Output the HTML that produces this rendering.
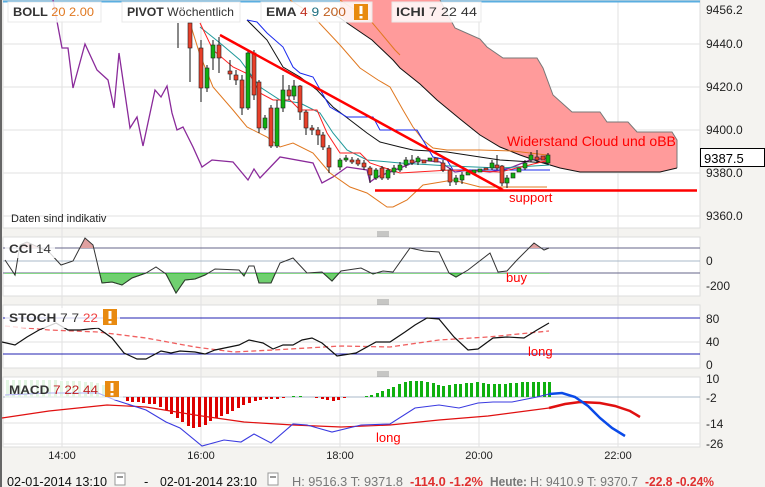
<!DOCTYPE html>
<html><head><meta charset="utf-8"><style>
html,body{margin:0;padding:0;background:#f4f3f0;}
svg{display:block;font-family:"Liberation Sans",sans-serif;}
</style></head><body>
<svg width="765" height="487" viewBox="0 0 765 487" xmlns="http://www.w3.org/2000/svg">
<rect width="765" height="487" fill="#f4f3f0"/>
<rect x="0" y="0" width="2" height="487" fill="#666"/>
<rect x="3" y="0" width="697" height="228" fill="#fff" stroke="#ddd"/>
<rect x="3" y="237" width="697" height="59" fill="#fff" stroke="#ddd"/>
<rect x="3" y="305" width="697" height="63" fill="#fff" stroke="#ddd"/>
<rect x="3" y="377" width="697" height="70" fill="#fff" stroke="#ddd"/>
<g stroke="#e2e2e2" stroke-width="1">
<line x1="62" y1="0" x2="62" y2="447"/><line x1="201" y1="0" x2="201" y2="447"/><line x1="340" y1="0" x2="340" y2="447"/><line x1="479" y1="0" x2="479" y2="447"/><line x1="618" y1="0" x2="618" y2="447"/>
<line x1="3" y1="44" x2="700" y2="44"/><line x1="3" y1="87" x2="700" y2="87"/><line x1="3" y1="130" x2="700" y2="130"/><line x1="3" y1="173" x2="700" y2="173"/><line x1="3" y1="216" x2="700" y2="216"/>
<line x1="3" y1="286" x2="700" y2="286"/><line x1="3" y1="342" x2="700" y2="342"/><line x1="3" y1="423" x2="700" y2="423"/><line x1="3" y1="444" x2="700" y2="444"/>
</g>
<line x1="3" y1="1.5" x2="700" y2="1.5" stroke="#5aaee0" stroke-width="2"/>
<polygon points="340,0 440,0 455,28 480,39 487,47 503,58 537,58 543,68 553,95 572,112 600,112 607,122 628,122 637,132 672,132 677,140 677,168 660,172 640,172 580,172 560,168 540,162 520,155 500,147 480,135 460,119 437,100 420,84 400,68 393,60 372,40 350,25 340,15" fill="#ff9b9b"/>
<polyline points="440,0 455,28 480,39 487,47 503,58 537,58 543,68 553,95 572,112 600,112 607,122 628,122 637,132 672,132 677,140 677,168" fill="none" stroke="#777"/>
<polyline points="677,168 660,172 640,172 580,172 560,168 540,162 520,155 500,147 480,135 460,119 437,100 420,84 400,68 393,60 372,40 350,25 340,18 330,12" fill="none" stroke="#111"/>
<polyline fill="none" stroke="#8a2a9a" stroke-width="1.3" points="53,0 62,48 68,48 73,88 85,44 97,70 108,80 114,108 119,53 130,128 137,117 143,146 155,90 161,97 167,86 172,113 177,130 183,127 193,147 202,167 212,160 233,162 248,180 254,169 260,178 280,157 313,163 322,183 333,177 347,167 367,170 370,182 377,177 390,172 400,168 420,160 440,162 455,172 470,170 490,172 510,168 530,160 548,158"/>
<polyline fill="none" stroke="#e07820" points="290,0 310,13 340,45 360,68 378,80 390,87 403,110 413,127 423,140 433,148 447,150 480,150 513,151 547,155"/>
<polyline fill="none" stroke="#e07820" points="190,23 200,55 213,87 233,110 247,127 267,137 280,147 293,143 313,153 330,173 350,187 367,193 387,207 393,207 407,200 423,185 453,180 480,187 547,187"/>
<polyline fill="none" stroke="#e07820" points="340,0 370,20 395,50 400,55"/>
<polyline fill="none" stroke="#111" points="247,20 267,40 283,67 300,77 317,90 333,107 350,120 367,133 380,142 400,147 413,150 447,152 480,157 500,160 548,163"/>
<polyline fill="none" stroke="#1a2aee" points="247,20 257,22 267,33 283,47 293,67 300,73 313,77 330,107 347,117 373,117 380,130 417,130 433,157 447,160 453,170 550,170"/>
<polyline fill="none" stroke="#20999a" points="200,27 220,43 240,60 260,87 280,100 300,103 320,113 333,133 347,150 367,160 400,163 450,166 500,168 550,165"/>
<polyline fill="none" stroke="#ff2020" points="200,23 213,50 233,67 250,75 260,93 273,100 290,100 300,110 317,110 327,133 340,153 360,153 370,163 400,173 450,170 500,172 550,160"/>
<g stroke="#111" stroke-width="1">
<line x1="178" y1="23" x2="178" y2="48"/>
<line x1="190" y1="23" x2="190" y2="82"/><line x1="201" y1="40" x2="201" y2="102"/><line x1="207" y1="65" x2="207" y2="92"/><line x1="213" y1="40" x2="213" y2="70"/><line x1="219" y1="37" x2="219" y2="73"/><line x1="230" y1="60" x2="230" y2="80"/><line x1="236" y1="70" x2="236" y2="85"/><line x1="242" y1="75" x2="242" y2="115"/><line x1="248" y1="50" x2="248" y2="110"/><line x1="254" y1="50" x2="254" y2="100"/><line x1="259" y1="80" x2="259" y2="133"/><line x1="265" y1="115" x2="265" y2="130"/><line x1="271" y1="105" x2="271" y2="148"/><line x1="277" y1="100" x2="277" y2="148"/><line x1="283" y1="75" x2="283" y2="112"/><line x1="289" y1="85" x2="289" y2="100"/><line x1="294" y1="80" x2="294" y2="100"/><line x1="300" y1="85" x2="300" y2="120"/><line x1="306" y1="110" x2="306" y2="135"/><line x1="312" y1="125" x2="312" y2="135"/><line x1="318" y1="127" x2="318" y2="145"/><line x1="323" y1="132" x2="323" y2="150"/><line x1="329" y1="145" x2="329" y2="173"/><line x1="340" y1="158" x2="340" y2="170"/><line x1="346" y1="155" x2="346" y2="162"/><line x1="352" y1="157" x2="352" y2="164"/><line x1="358" y1="158" x2="358" y2="166"/><line x1="364" y1="160" x2="364" y2="170"/><line x1="370" y1="166" x2="370" y2="183"/><line x1="376" y1="168" x2="376" y2="180"/><line x1="382" y1="166" x2="382" y2="180"/><line x1="388" y1="168" x2="388" y2="180"/><line x1="394" y1="165" x2="394" y2="175"/><line x1="400" y1="162" x2="400" y2="172"/><line x1="406" y1="157" x2="406" y2="168"/><line x1="412" y1="155" x2="412" y2="165"/><line x1="418" y1="156" x2="418" y2="165"/><line x1="443" y1="160" x2="443" y2="172"/><line x1="450" y1="168" x2="450" y2="186"/><line x1="456" y1="175" x2="456" y2="185"/><line x1="462" y1="172" x2="462" y2="184"/><line x1="492" y1="160" x2="492" y2="170"/><line x1="497" y1="155" x2="497" y2="170"/><line x1="502" y1="165" x2="502" y2="186"/><line x1="507" y1="175" x2="507" y2="188"/><line x1="525" y1="160" x2="525" y2="170"/><line x1="531" y1="152" x2="531" y2="162"/><line x1="537" y1="150" x2="537" y2="163"/><line x1="548" y1="153" x2="548" y2="165"/>
</g>
<g stroke="#222" stroke-width="0.6">
<g fill="#e8402a">
<rect x="188" y="23" width="4" height="25"/><rect x="199" y="48" width="4" height="40"/><rect x="217" y="45" width="4" height="13"/><rect x="228" y="71" width="4" height="3"/><rect x="234" y="75" width="4" height="5"/><rect x="240" y="80" width="4" height="28"/><rect x="252" y="53" width="4" height="42"/><rect x="257" y="82" width="4" height="46"/><rect x="269" y="108" width="4" height="38"/><rect x="287" y="90" width="4" height="6"/><rect x="298" y="86" width="4" height="26"/><rect x="304" y="112" width="4" height="16"/><rect x="310" y="128" width="4" height="2"/><rect x="316" y="130" width="4" height="5"/><rect x="321" y="135" width="4" height="12"/><rect x="327" y="148" width="4" height="19"/><rect x="350" y="160" width="4" height="2"/><rect x="356" y="160" width="4" height="4"/><rect x="362" y="163" width="4" height="4"/><rect x="368" y="168" width="4" height="7"/><rect x="380" y="168" width="4" height="10"/><rect x="410" y="160" width="4" height="3"/><rect x="422" y="160" width="4" height="3"/><rect x="434" y="158" width="4" height="4"/><rect x="441" y="163" width="4" height="7"/><rect x="448" y="170" width="4" height="12"/><rect x="484" y="168" width="4" height="2"/><rect x="495" y="165" width="4" height="3"/><rect x="500" y="166" width="4" height="17"/><rect x="535" y="157" width="4" height="3"/><rect x="541" y="156" width="4" height="4"/>
</g>
<g fill="#10b010">
<rect x="205" y="68" width="4" height="20"/><rect x="211" y="45" width="4" height="13"/><rect x="246" y="53" width="4" height="55"/><rect x="263" y="118" width="4" height="10"/><rect x="275" y="108" width="4" height="38"/><rect x="281" y="90" width="4" height="18"/><rect x="292" y="86" width="4" height="10"/><rect x="338" y="160" width="4" height="7"/><rect x="344" y="158" width="4" height="2"/><rect x="374" y="170" width="4" height="8"/><rect x="386" y="170" width="4" height="8"/><rect x="392" y="168" width="4" height="4"/><rect x="398" y="165" width="4" height="5"/><rect x="404" y="160" width="4" height="5"/><rect x="416" y="158" width="4" height="4"/><rect x="428" y="158" width="4" height="3"/><rect x="454" y="178" width="4" height="4"/><rect x="460" y="175" width="4" height="5"/><rect x="466" y="172" width="4" height="3"/><rect x="472" y="170" width="4" height="3"/><rect x="478" y="169" width="4" height="3"/><rect x="490" y="163" width="4" height="5"/><rect x="505" y="178" width="4" height="5"/><rect x="511" y="173" width="4" height="5"/><rect x="517" y="168" width="4" height="4"/><rect x="523" y="163" width="4" height="5"/><rect x="529" y="155" width="4" height="5"/><rect x="546" y="155" width="4" height="8"/>
</g></g>
<line x1="220" y1="35" x2="503" y2="190" stroke="#f00" stroke-width="2.5"/>
<line x1="375" y1="190.5" x2="697" y2="190.5" stroke="#f00" stroke-width="2.5"/>
<text x="507" y="146" font-size="14" fill="#f00">Widerstand Cloud und oBB</text>
<text x="509" y="202" font-size="13" fill="#f00">support</text>
<g fill="#fff" fill-opacity="0.85" stroke="#e8e8e8">
<rect x="8" y="2" width="93" height="20"/><rect x="122" y="2" width="118" height="20"/><rect x="261" y="2" width="111" height="20"/><rect x="392" y="2" width="89" height="20"/>
</g>
<g font-size="12">
<text x="13" y="16" fill="#333" font-weight="bold" textLength="81" lengthAdjust="spacingAndGlyphs">BOLL <tspan fill="#e07820" font-weight="normal">20 2.00</tspan></text>
<text x="127" y="16" fill="#333" font-weight="bold" textLength="107" lengthAdjust="spacingAndGlyphs">PIVOT <tspan font-weight="normal">Wöchentlich</tspan></text>
<text x="266" y="16" fill="#333" font-weight="bold" textLength="80" lengthAdjust="spacingAndGlyphs">EMA <tspan fill="#c03020" font-weight="normal">4 </tspan><tspan fill="#207080" font-weight="normal">9 </tspan><tspan fill="#c06020" font-weight="normal">200</tspan></text>
<text x="396" y="16" fill="#333" font-weight="bold" textLength="81" lengthAdjust="spacingAndGlyphs">ICHI <tspan font-weight="normal">7 22 44</tspan></text>
<text x="11" y="222" font-size="11" fill="#222">Daten sind indikativ</text>
</g>
<rect x="354" y="4" width="14" height="16" fill="#e88a10"/><rect x="359.5" y="6" width="3" height="8" fill="#fff"/><rect x="359.5" y="16" width="3" height="2.5" fill="#fff"/>
<g font-size="12" fill="#222">
<text x="706" y="14">9456.2</text><text x="706" y="48">9440.0</text><text x="706" y="91">9420.0</text><text x="706" y="134">9400.0</text><text x="706" y="177">9380.0</text><text x="706" y="220">9360.0</text>
<text x="706" y="265">0</text><text x="706" y="290">-200</text>
<text x="706" y="323">80</text><text x="706" y="346">40</text><text x="706" y="369">0</text>
<text x="706" y="383">10</text><text x="706" y="402">-2</text><text x="706" y="428">-14</text><text x="706" y="448">-26</text>
</g>
<rect x="700.5" y="148.5" width="64" height="18" fill="#fff" stroke="#000"/>
<text x="704" y="163" font-size="13" fill="#000">9387.5</text>
<g stroke="#999"><line x1="377" y1="232" x2="389" y2="232"/><line x1="377" y1="234" x2="389" y2="234"/><line x1="377" y1="236" x2="389" y2="236"/>
<line x1="377" y1="300" x2="389" y2="300"/><line x1="377" y1="302" x2="389" y2="302"/><line x1="377" y1="304" x2="389" y2="304"/>
<line x1="377" y1="372" x2="389" y2="372"/><line x1="377" y1="374" x2="389" y2="374"/><line x1="377" y1="376" x2="389" y2="376"/></g>
<line x1="3" y1="248" x2="700" y2="248" stroke="#66668a"/>
<line x1="3" y1="261" x2="700" y2="261" stroke="#a8b8c8"/>
<line x1="3" y1="273" x2="700" y2="273" stroke="#66668a"/>
<defs>
<clipPath id="cb"><rect x="0" y="273" width="700" height="30"/></clipPath>
<clipPath id="ct"><rect x="0" y="230" width="700" height="18"/></clipPath>
</defs>
<polygon clip-path="url(#cb)" fill="#70d070" stroke="#10b010" points="5,273 5,260 15,275 20,245 27,242 49,252 61,265 73,261 85,238 93,245 102,283 112,282 122,285 132,278 146,273 156,267 166,274 176,293 185,280 195,279 205,275 215,269 239,270 244,276 249,266 254,266 259,283 271,283 280,263 293,258 307,273 322,272 332,281 341,271 361,268 373,274 383,271 393,272 410,248 424,251 439,252 449,273 456,277 468,270 490,253 498,272 507,271 517,260 534,243 544,250 549,248 549,273"/>
<polygon clip-path="url(#ct)" fill="#e0a0a0" points="5,248 5,260 15,275 20,245 27,242 49,252 61,265 73,261 85,238 93,245 102,283 112,282 122,285 132,278 146,273 156,267 166,274 176,293 185,280 195,279 205,275 215,269 239,270 244,276 249,266 254,266 259,283 271,283 280,263 293,258 307,273 322,272 332,281 341,271 361,268 373,274 383,271 393,272 410,248 424,251 439,252 449,273 456,277 468,270 490,253 498,272 507,271 517,260 534,243 544,250 549,248"/>
<polyline fill="none" stroke="#333" points="5,260 15,275 20,245 27,242 49,252 61,265 73,261 85,238 93,245 102,283 112,282 122,285 132,278 146,273 156,267 166,274 176,293 185,280 195,279 205,275 215,269 239,270 244,276 249,266 254,266 259,283 271,283 280,263 293,258 307,273 322,272 332,281 341,271 361,268 373,274 383,271 393,272 410,248 424,251 439,252 449,273 456,277 468,270 490,253 498,272 507,271 517,260 534,243 544,250 549,248"/>
<rect x="5" y="240" width="50" height="18" fill="#fff" fill-opacity="0.8"/>
<text x="9" y="253" font-size="12" fill="#333" font-weight="bold" textLength="42" lengthAdjust="spacingAndGlyphs">CCI <tspan font-weight="normal">14</tspan></text>
<text x="506" y="282" font-size="13" fill="#f00">buy</text>
<line x1="3" y1="318" x2="700" y2="318" stroke="#2020b0"/>
<line x1="3" y1="354" x2="700" y2="354" stroke="#2020b0"/>
<polyline fill="none" stroke="#f06060" stroke-width="1.3" stroke-dasharray="5,3" points="5,326 49,330 98,332 146,338 195,347 234,352 273,350 341,346 390,347 439,340 488,337 549,331"/>
<polyline fill="none" stroke="#111" stroke-width="1.2" points="2,342 15,345 27,337 39,330 56,323 68,330 80,330 98,328 112,338 124,353 137,359 146,359 161,351 171,353 180,351 195,352 205,354 215,350 239,345 249,340 263,343 273,349 283,345 293,345 302,340 312,338 322,343 337,356 356,353 376,342 390,342 405,332 415,325 427,318 439,319 454,337 468,350 478,349 493,338 507,337 524,338 537,330 549,323"/>
<rect x="5" y="308" width="115" height="20" fill="#fff" fill-opacity="0.8"/>
<text x="9" y="322" font-size="12" fill="#333" font-weight="bold" textLength="89" lengthAdjust="spacingAndGlyphs">STOCH <tspan font-weight="normal">7 7 </tspan><tspan fill="#f04040" font-weight="normal">22</tspan></text>
<rect x="103" y="309" width="14" height="16" fill="#e88a10"/><rect x="108.5" y="311" width="3" height="8" fill="#fff"/><rect x="108.5" y="321" width="3" height="2.5" fill="#fff"/>
<text x="528" y="356" font-size="13" fill="#f00">long</text>
<line x1="3" y1="397" x2="700" y2="397" stroke="#a8b8c8"/>
<g fill="#b8e8b8"><rect x="6" y="380" width="3" height="17"/><rect x="12" y="380" width="3" height="17"/><rect x="18" y="380" width="3" height="17"/><rect x="24" y="380" width="3" height="17"/><rect x="30" y="380" width="3" height="17"/><rect x="36" y="380" width="3" height="17"/><rect x="42" y="380" width="3" height="17"/><rect x="48" y="380" width="3" height="17"/><rect x="54" y="380" width="3" height="17"/><rect x="60" y="381" width="3" height="16"/><rect x="66" y="381" width="3" height="16"/><rect x="72" y="381" width="3" height="16"/><rect x="78" y="381" width="3" height="16"/><rect x="84" y="382" width="3" height="15"/><rect x="90" y="382" width="3" height="15"/><rect x="96" y="383" width="3" height="14"/><rect x="102" y="385" width="3" height="12"/></g>
<g fill="#dd0000">
<rect x="126" y="397" width="3" height="4"/><rect x="131" y="397" width="3" height="5"/><rect x="137" y="397" width="3" height="5"/><rect x="142" y="397" width="3" height="6"/><rect x="148" y="397" width="3" height="7"/><rect x="153" y="397" width="3" height="7"/><rect x="159" y="397" width="3" height="10"/><rect x="165" y="397" width="3" height="13"/><rect x="170" y="397" width="3" height="17"/><rect x="176" y="397" width="3" height="21"/><rect x="181" y="397" width="3" height="25"/><rect x="187" y="397" width="3" height="29"/><rect x="192" y="397" width="3" height="31"/><rect x="198" y="397" width="3" height="30"/><rect x="204" y="397" width="3" height="28"/><rect x="209" y="397" width="3" height="24"/><rect x="215" y="397" width="3" height="21"/><rect x="220" y="397" width="3" height="19"/><rect x="226" y="397" width="3" height="17"/><rect x="231" y="397" width="3" height="14"/><rect x="237" y="397" width="3" height="11"/><rect x="242" y="397" width="3" height="8"/><rect x="248" y="397" width="3" height="6"/><rect x="254" y="397" width="3" height="4"/><rect x="259" y="397" width="3" height="3"/><rect x="265" y="397" width="3" height="2"/><rect x="270" y="397" width="3" height="2"/><rect x="276" y="397" width="3" height="2"/><rect x="282" y="397" width="3" height="1"/><rect x="315" y="397" width="3" height="1"/><rect x="321" y="397" width="3" height="2"/><rect x="326" y="397" width="3" height="3"/><rect x="332" y="397" width="3" height="4"/><rect x="337" y="397" width="3" height="3"/><rect x="343" y="397" width="3" height="1"/>
</g>
<g fill="#10b010">
<rect x="292" y="396" width="3" height="1"/><rect x="299" y="396" width="3" height="1"/><rect x="365" y="396" width="3" height="1"/><rect x="370" y="395" width="3" height="2"/><rect x="376" y="393" width="3" height="4"/><rect x="381" y="391" width="3" height="6"/><rect x="387" y="389" width="3" height="8"/><rect x="392" y="387" width="3" height="10"/><rect x="398" y="384" width="3" height="13"/><rect x="404" y="382" width="3" height="15"/><rect x="409" y="381" width="3" height="16"/><rect x="415" y="381" width="3" height="16"/><rect x="420" y="381" width="3" height="16"/><rect x="426" y="382" width="3" height="15"/><rect x="432" y="383" width="3" height="14"/><rect x="437" y="385" width="3" height="12"/><rect x="442" y="386" width="3" height="11"/><rect x="448" y="385" width="3" height="12"/><rect x="454" y="384" width="3" height="13"/><rect x="459" y="384" width="3" height="13"/><rect x="465" y="383" width="3" height="14"/><rect x="470" y="383" width="3" height="14"/><rect x="476" y="382" width="3" height="15"/><rect x="482" y="383" width="3" height="14"/><rect x="487" y="384" width="3" height="13"/><rect x="493" y="384" width="3" height="13"/><rect x="498" y="384" width="3" height="13"/><rect x="504" y="384" width="3" height="13"/><rect x="509" y="383" width="3" height="14"/><rect x="515" y="383" width="3" height="14"/><rect x="521" y="382" width="3" height="15"/><rect x="526" y="382" width="3" height="15"/><rect x="532" y="382" width="3" height="15"/><rect x="537" y="382" width="3" height="15"/><rect x="543" y="382" width="3" height="15"/><rect x="548" y="382" width="3" height="15"/>
</g>
<polyline fill="none" stroke="#e01010" stroke-width="1.2" points="2,418 49,411 107,405 146,407 195,415 244,422 293,425 341,427 390,425 439,420 488,416 549,408"/>
<polyline fill="none" stroke="#e01010" stroke-width="2.5" points="549,408 565,404 580,402 600,403 615,406 630,411 640,417"/>
<polyline fill="none" stroke="#3a3ae0" stroke-width="1.1" points="5,395 49,393 98,393 115,400 146,410 166,422 180,428 202,446 224,440 241,442 254,434 271,443 293,424 307,425 332,432 361,425 390,424 415,408 439,405 459,408 478,403 493,402 512,402 537,397 549,394"/>
<polyline fill="none" stroke="#0a4ae8" stroke-width="2.5" points="549,394 562,393 575,397 588,406 600,418 612,428 625,436"/>
<rect x="5" y="380" width="118" height="20" fill="#fff" fill-opacity="0.6"/>
<text x="9" y="394" font-size="12" fill="#333" font-weight="bold" textLength="89" lengthAdjust="spacingAndGlyphs">MACD <tspan fill="#c02020" font-weight="normal">7 22 44</tspan></text>
<rect x="105" y="381" width="14" height="16" fill="#e88a10"/><rect x="110.5" y="383" width="3" height="8" fill="#fff"/><rect x="110.5" y="393" width="3" height="2.5" fill="#fff"/>
<text x="376" y="442" font-size="13" fill="#f00">long</text>
<g font-size="11" fill="#222" text-anchor="middle"><text x="62" y="459">14:00</text><text x="201" y="459">16:00</text><text x="340" y="459">18:00</text><text x="479" y="459">20:00</text><text x="618" y="459">22:00</text></g>
<g font-size="13">
<text x="7" y="486" fill="#111" textLength="100" lengthAdjust="spacingAndGlyphs">02-01-2014 13:10</text>
<rect x="115" y="473" width="10" height="12" fill="#fff" stroke="#999"/><rect x="117" y="476" width="6" height="2" fill="#999"/>
<text x="144" y="486" fill="#111">-</text>
<text x="160" y="486" fill="#111" textLength="97" lengthAdjust="spacingAndGlyphs">02-01-2014 23:10</text>
<rect x="268" y="473" width="10" height="12" fill="#fff" stroke="#999"/><rect x="270" y="476" width="6" height="2" fill="#999"/>
<text x="292" y="486" fill="#777" textLength="111" lengthAdjust="spacingAndGlyphs">H: 9516.3  T: 9371.8</text>
<text x="410" y="486" fill="#e03030" font-weight="bold" textLength="73" lengthAdjust="spacingAndGlyphs">-114.0  -1.2%</text>
<text x="490" y="486" fill="#777" font-weight="bold" textLength="37" lengthAdjust="spacingAndGlyphs">Heute:</text>
<text x="530" y="486" fill="#777" textLength="108" lengthAdjust="spacingAndGlyphs">H: 9410.9  T: 9370.7</text>
<text x="645" y="486" fill="#e03030" font-weight="bold" textLength="69" lengthAdjust="spacingAndGlyphs">-22.8  -0.24%</text>
</g>
</svg>
</body></html>
